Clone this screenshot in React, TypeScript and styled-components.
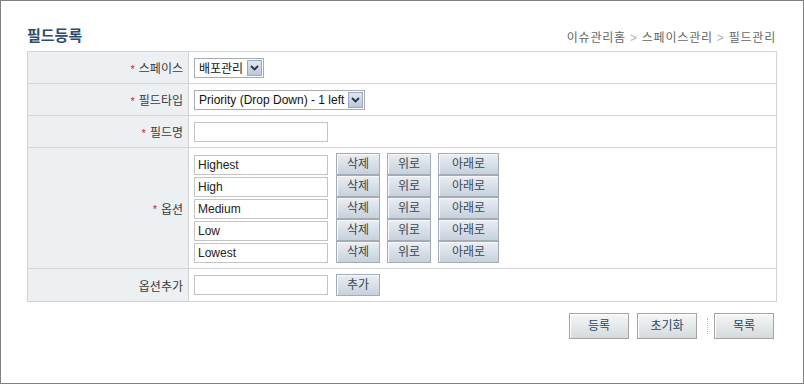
import React from "react";
import styled, { createGlobalStyle } from "styled-components";

const GlobalStyle = createGlobalStyle`
  html, body {
    margin: 0;
    padding: 0;
    background: #fff;
  }

  body {
    font-family: "Liberation Sans", "Noto Sans CJK KR", sans-serif;
    font-size: 12px;
    color: #333;
  }
`;

const Frame = styled.div`
  width: 804px;
  height: 384px;
  box-sizing: border-box;
  border: 1px solid #808080;
  padding: 0 26px;
  background: #fff;
`;

const Header = styled.div`
  height: 50px;
  box-sizing: border-box;
  display: flex;
  justify-content: space-between;
  align-items: flex-end;
  padding: 0 1px 6px 0;
`;

const Title = styled.h1`
  margin: 0;
  font-size: 15px;
  line-height: 18px;
  font-weight: bold;
  color: #2b4b6e;
`;

const Breadcrumb = styled.div`
  font-size: 12px;
  line-height: 14px;
  letter-spacing: 0.8px;
  color: #666;
`;

const Divider = styled.span`
  color: #b0b0b0;
  margin: 0 4px;
`;

const Table = styled.div`
  border: 1px solid #d3d3d3;
  border-bottom: none;
`;

const Row = styled.div<{ $h: number }>`
  display: grid;
  grid-template-columns: 161px 1fr;
  height: ${(p) => p.$h}px;
  box-sizing: border-box;
  border-bottom: 1px solid #d3d3d3;
`;

const Label = styled.div`
  box-sizing: border-box;
  background: #edf0f3;
  border-right: 1px solid #d3d3d3;
  display: flex;
  align-items: center;
  justify-content: flex-end;
  padding-right: 5px;
  color: #3a3a3a;
`;

const Required = styled.span`
  color: #c0262c;
  margin-right: 4px;
  font-size: 11px;
  padding-top: 2px;
`;

const Cell = styled.div`
  display: flex;
  align-items: center;
  padding-left: 5px;
`;

const SelectBox = styled.div`
  display: inline-flex;
  align-items: center;
  height: 20px;
  box-sizing: border-box;
  border: 1px solid #a5acb2;
  padding-left: 4px;
  background: #fff;
  color: #111;
  cursor: default;
`;

const SelectArrow = styled.span`
  display: flex;
  align-items: center;
  justify-content: center;
  width: 15px;
  height: 16px;
  box-sizing: border-box;
  margin: 0 1px 0 4px;
  border: 1px solid #9aa8bf;
  background: linear-gradient(#dfe6f1, #bac7dc);
`;

const TextInput = styled.input`
  width: 134px;
  height: 20px;
  box-sizing: border-box;
  border: 1px solid #c4c4c4;
  padding: 0 3px;
  margin: 0;
  font-family: "Liberation Sans", "Noto Sans CJK KR", sans-serif;
  font-size: 12px;
  color: #222;
  outline: none;
`;

const OptionList = styled.div`
  display: flex;
  flex-direction: column;
`;

const OptionLine = styled.div`
  display: flex;
  align-items: flex-end;
  height: 22px;
`;

const ButtonGroup = styled.div`
  display: flex;
  gap: 7px;
  margin-left: 8px;
`;

const SmallButton = styled.button<{ $w: number }>`
  width: ${(p) => p.$w}px;
  height: 22px;
  box-sizing: border-box;
  margin: 0;
  padding: 0 0 3px;
  border: 1px solid #a3acb5;
  box-shadow: inset 1px 1px 0 #f7f9fb;
  background: linear-gradient(#e9eef3, #c7d1dc);
  font-family: "Noto Sans CJK KR", sans-serif;
  font-size: 12px;
  line-height: 1;
  color: #3a4652;
  cursor: pointer;
`;

const Footer = styled.div`
  display: flex;
  justify-content: flex-end;
  align-items: center;
  gap: 8px;
  margin-top: 11px;
  padding-right: 3px;
`;

const BigButton = styled.button`
  width: 60px;
  height: 26px;
  box-sizing: border-box;
  margin: 0;
  padding: 0 0 2px;
  border: 1px solid #a4a4a4;
  box-shadow: inset 1px 1px 0 #fff;
  background: linear-gradient(#f5f7f7, #d5dada);
  font-family: "Noto Sans CJK KR", sans-serif;
  font-size: 12px;
  line-height: 1;
  color: #24476b;
  cursor: pointer;
`;

const Separator = styled.span`
  width: 0;
  height: 16px;
  border-left: 1px dotted #bdbdbd;
  margin: 0 -2px 0 2px;
`;

const Chevron = () => (
  <svg width="9" height="6" viewBox="0 0 9 6">
    <path d="M1 1 L4.5 4.5 L8 1" fill="none" stroke="#2a3340" strokeWidth="1.8" />
  </svg>
);

const Select = ({ value }: { value: string }) => (
  <SelectBox>
    <span>{value}</span>
    <SelectArrow>
      <Chevron />
    </SelectArrow>
  </SelectBox>
);

const options = ["Highest", "High", "Medium", "Low", "Lowest"];

const App = () => {
  return (
    <>
      <GlobalStyle />
      <Frame>
        <Header>
          <Title>필드등록</Title>
          <Breadcrumb>
            이슈관리홈<Divider>&gt;</Divider>스페이스관리<Divider>&gt;</Divider>필드관리
          </Breadcrumb>
        </Header>

        <Table>
          <Row $h={32}>
            <Label>
              <Required>*</Required>스페이스
            </Label>
            <Cell>
              <Select value="배포관리" />
            </Cell>
          </Row>
          <Row $h={32}>
            <Label>
              <Required>*</Required>필드타입
            </Label>
            <Cell>
              <Select value="Priority (Drop Down) - 1 left" />
            </Cell>
          </Row>
          <Row $h={32}>
            <Label>
              <Required>*</Required>필드명
            </Label>
            <Cell>
              <TextInput defaultValue="" />
            </Cell>
          </Row>
          <Row $h={121}>
            <Label>
              <Required>*</Required>옵션
            </Label>
            <Cell>
              <OptionList>
                {options.map((opt) => (
                  <OptionLine key={opt}>
                    <TextInput defaultValue={opt} />
                    <ButtonGroup>
                      <SmallButton $w={44}>삭제</SmallButton>
                      <SmallButton $w={44}>위로</SmallButton>
                      <SmallButton $w={61}>아래로</SmallButton>
                    </ButtonGroup>
                  </OptionLine>
                ))}
              </OptionList>
            </Cell>
          </Row>
          <Row $h={33}>
            <Label>옵션추가</Label>
            <Cell>
              <TextInput defaultValue="" />
              <ButtonGroup>
                <SmallButton $w={44}>추가</SmallButton>
              </ButtonGroup>
            </Cell>
          </Row>
        </Table>

        <Footer>
          <BigButton>등록</BigButton>
          <BigButton>초기화</BigButton>
          <Separator />
          <BigButton>목록</BigButton>
        </Footer>
      </Frame>
    </>
  );
};

export default App;
